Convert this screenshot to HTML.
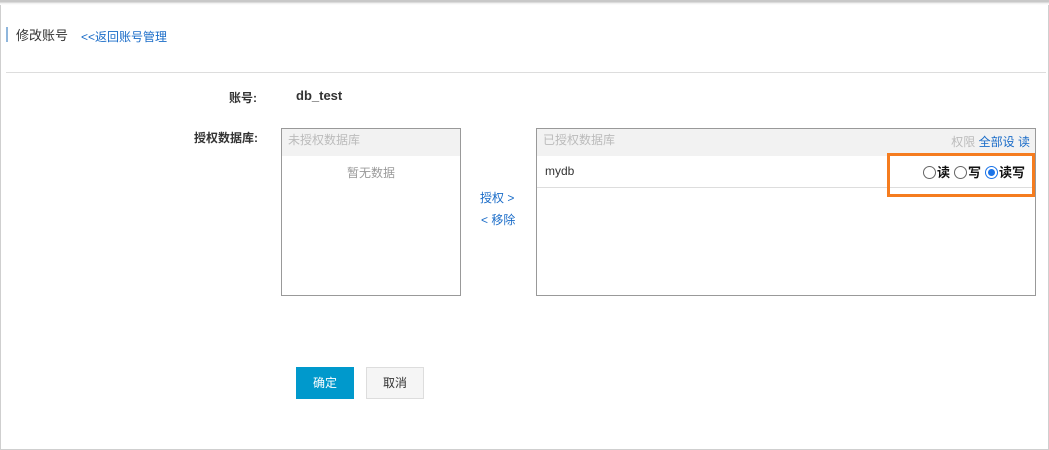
<!DOCTYPE html>
<html><head><meta charset="utf-8"><style>
*{margin:0;padding:0;box-sizing:border-box}
body{width:1049px;height:450px;background:#fff;font-family:"Liberation Sans","Noto Sans CJK SC",sans-serif;font-size:12px;color:#333;position:relative;overflow:hidden}
.a{position:absolute}
.r{display:inline-block;width:13px;height:13px;border:1px solid #666;border-radius:50%;vertical-align:-2px;margin-left:4px;margin-right:1px;position:relative}
</style></head><body>
<div class="a" style="left:0;top:0;width:1049px;height:450px;border:1px solid #cfcfcf;border-top:none"></div>
<div class="a" style="left:0;top:0;width:1049px;height:5px;background:linear-gradient(#c8c8c8,#c8c8c8 2px,#eee 3px,#fff)"></div>
<div class="a" style="left:6px;top:27px;width:2px;height:15px;background:#8fb6dc"></div>
<div class="a" style="left:16px;top:25px;font-size:13px;color:#333">修改账号</div>
<div class="a" style="left:81px;top:28px;font-size:12px;color:#1a6cc8">&lt;&lt;返回账号管理</div>
<div class="a" style="left:6px;top:72px;width:1040px;height:1px;background:#ddd"></div>
<div class="a" style="left:229px;top:89px;font-weight:bold;color:#333">账号:</div>
<div class="a" style="left:296px;top:88px;font-size:13px;font-weight:bold;color:#333">db_test</div>
<div class="a" style="left:194px;top:129px;font-weight:bold;color:#333">授权数据库:</div>
<div class="a" style="left:281px;top:128px;width:180px;height:168px;border:1px solid #999">
 <div style="height:27px;background:#f2f2f2;color:#bbb;padding:2px 6px">未授权数据库</div>
 <div style="text-align:center;color:#999;padding-top:8px">暂无数据</div>
</div>
<div class="a" style="left:480px;top:189px;color:#1a6cc8">授权 &gt;</div>
<div class="a" style="left:481px;top:211px;color:#1a6cc8">&lt; 移除</div>
<div class="a" style="left:536px;top:128px;width:500px;height:168px;border:1px solid #999">
 <div style="height:27px;background:#f2f2f2;color:#bbb;padding:2px 6px;position:relative">已授权数据库
  <span style="position:absolute;right:5px;top:4px"><span style="color:#bbb">权限</span> <span style="color:#1a6cc8">全部设 读</span></span></div>
 <div style="height:32px;border-bottom:1px solid #ddd;padding:8px 8px;position:relative">mydb
  <span style="position:absolute;right:10px;top:6px;color:#111;font-size:13px;font-weight:bold">
   <span class="r"></span>读<span class="r"></span>写<span class="r" style="border-color:#1a73e8"><span style="position:absolute;left:2px;top:2px;width:7px;height:7px;border-radius:50%;background:#1a73e8"></span></span>读写</span>
 </div>
</div>
<div class="a" style="left:887px;top:153px;width:148px;height:44px;border:3px solid #f57c1f"></div>
<div class="a" style="left:296px;top:367px;width:58px;height:32px;background:#0099cc;color:#fff;text-align:center;line-height:32px">确定</div>
<div class="a" style="left:366px;top:367px;width:58px;height:32px;background:#f5f5f5;border:1px solid #ddd;color:#333;text-align:center;line-height:30px">取消</div>
</body></html>
